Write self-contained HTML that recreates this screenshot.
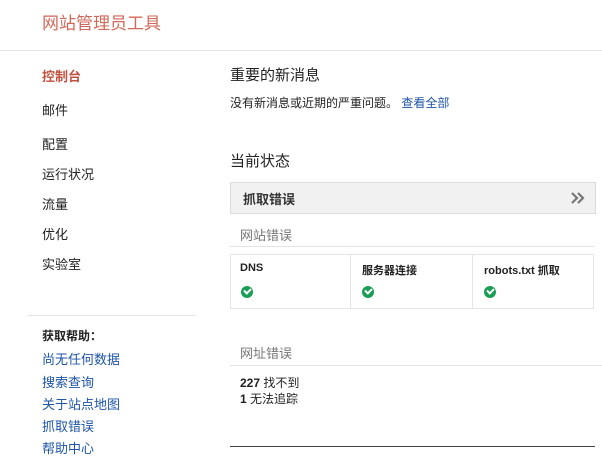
<!DOCTYPE html><html><head><meta charset="utf-8"><style>
body{margin:0;width:602px;height:449px;overflow:hidden;background:#fff;font-family:"Liberation Sans","Noto Sans CJK SC",sans-serif;font-size:12px;color:#222;position:relative}
.a{position:absolute;white-space:nowrap}
.nav{left:42px;font-size:13px}
.lk{left:42px;font-size:13px;color:#1e55a5}
.ck{width:12px;height:12px;border-radius:50%;background:#1a9e55;position:absolute}
.ck:after{content:"";position:absolute;left:3px;top:2px;width:5px;height:3px;border-left:2px solid #fff;border-bottom:2px solid #fff;transform:rotate(-45deg)}
</style></head><body>
<div class="a" style="left:42px;top:9px;font-size:17px;color:#d1695a">网站管理员工具</div>
<div class="a" style="left:0;top:50px;width:602px;height:1px;background:#e5e5e5"></div>
<div class="a nav" style="top:66px;color:#c0513f;font-weight:bold">控制台</div>
<div class="a nav" style="top:100px">邮件</div>
<div class="a nav" style="top:134px">配置</div>
<div class="a nav" style="top:164px">运行状况</div>
<div class="a nav" style="top:194px">流量</div>
<div class="a nav" style="top:224px">优化</div>
<div class="a nav" style="top:254px">实验室</div>
<div class="a" style="left:27px;top:315px;width:169px;height:1px;background:#e5e5e5"></div>
<div class="a nav" style="top:327px;font-weight:bold;font-size:12px">获取帮助：</div>
<div class="a lk" style="top:349px">尚无任何数据</div>
<div class="a lk" style="top:372px">搜索查询</div>
<div class="a lk" style="top:394px">关于站点地图</div>
<div class="a lk" style="top:416px">抓取错误</div>
<div class="a lk" style="top:438px">帮助中心</div>
<div class="a" style="left:230px;top:64px;font-size:15px">重要的新消息</div>
<div class="a" style="left:230px;top:94px">没有新消息或近期的严重问题。 <span style="color:#1e55a5">查看全部</span></div>
<div class="a" style="left:230px;top:150px;font-size:15px">当前状态</div>
<div class="a" style="left:230px;top:182px;width:364px;height:30px;background:#f1f1f1;border:1px solid #dcdcdc"></div>
<div class="a" style="left:243px;top:189px;font-size:13px;font-weight:bold;color:#333">抓取错误</div>
<svg class="a" style="left:570px;top:191px" width="16" height="14" viewBox="0 0 16 14"><path d="M2 2l5 5-5 5M8 2l5 5-5 5" fill="none" stroke="#777" stroke-width="2.2"/></svg>
<div class="a" style="left:240px;top:225px;font-size:13px;color:#777">网站错误</div>
<div class="a" style="left:230px;top:246px;width:364px;height:1px;background:#e5e5e5"></div>
<div class="a" style="left:230px;top:254px;width:362px;height:53px;border:1px solid #e5e5e5"></div>
<div class="a" style="left:350px;top:254px;width:1px;height:55px;background:#e5e5e5"></div>
<div class="a" style="left:472px;top:254px;width:1px;height:55px;background:#e5e5e5"></div>
<div class="a" style="left:240px;top:262px;font-weight:bold;font-size:11px">DNS</div>
<div class="a" style="left:362px;top:262px;font-weight:bold;font-size:11px">服务器连接</div>
<div class="a" style="left:484px;top:262px;font-weight:bold;font-size:11px">robots.txt 抓取</div>
<div class="ck" style="left:241px;top:286px"></div>
<div class="ck" style="left:362px;top:286px"></div>
<div class="ck" style="left:484px;top:286px"></div>
<div class="a" style="left:240px;top:343px;font-size:13px;color:#777">网址错误</div>
<div class="a" style="left:230px;top:365px;width:372px;height:1px;background:#e5e5e5"></div>
<div class="a" style="left:240px;top:374px"><b>227</b> 找不到</div>
<div class="a" style="left:240px;top:390px"><b>1</b> 无法追踪</div>
<div class="a" style="left:230px;top:446px;width:365px;height:1px;background:#444"></div>
</body></html>
